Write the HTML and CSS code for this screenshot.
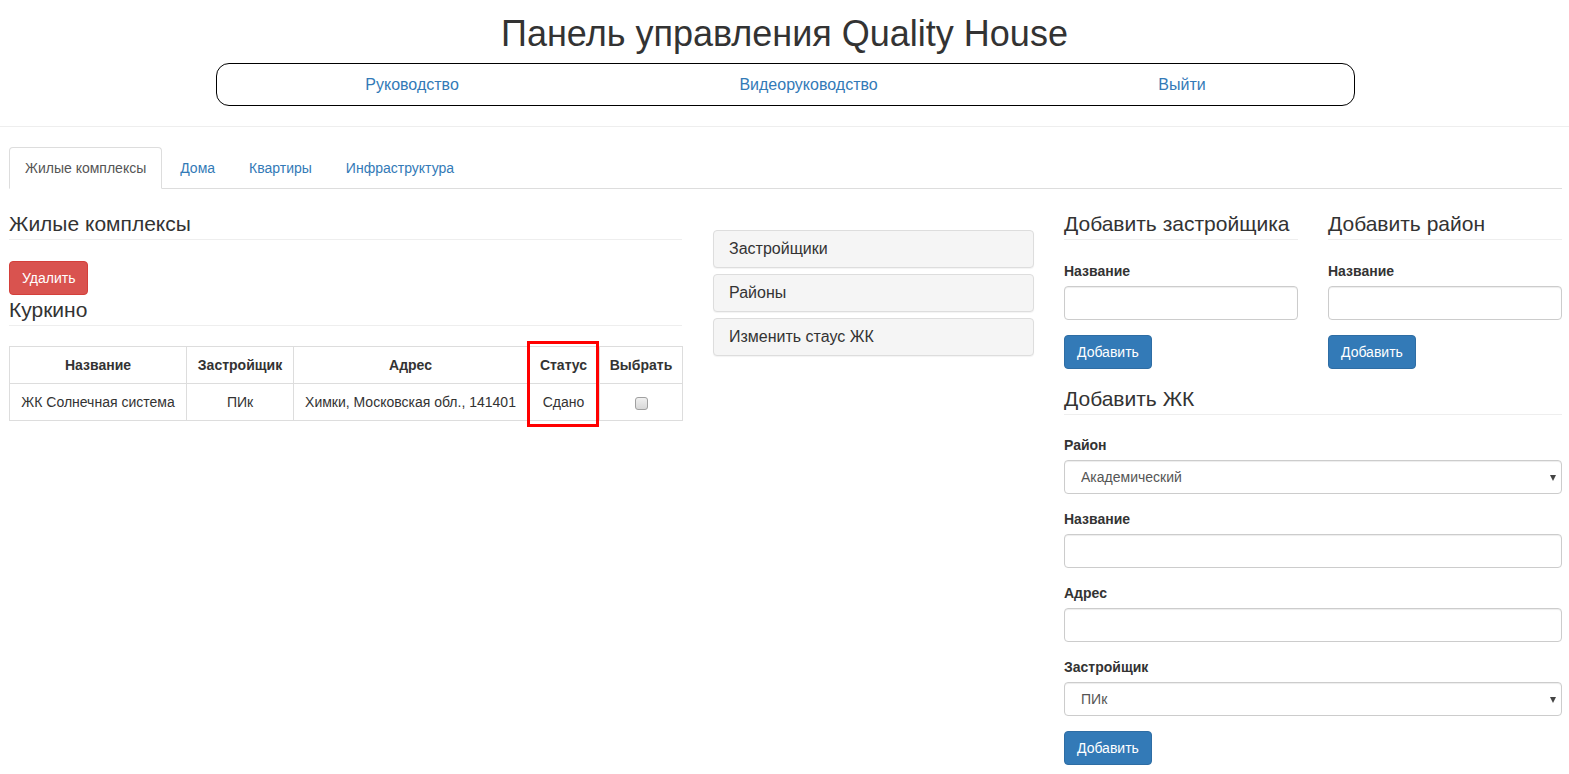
FILE: index.html
```html
<!DOCTYPE html>
<html lang="ru">
<head>
<meta charset="utf-8">
<title>Панель управления Quality House</title>
<link rel="stylesheet" href="styles.css">
</head>
<body>
<header class="top">
  <h1 class="title">Панель управления Quality House</h1>
  <nav class="mainnav">
    <a href="#">Руководство</a>
    <a href="#">Видеоруководство</a>
    <a href="#">Выйти</a>
  </nav>
</header>
<hr class="divider">
<div class="page">
  <ul class="tabs">
    <li class="tab active"><a href="#">Жилые комплексы</a></li>
    <li class="tab"><a href="#">Дома</a></li>
    <li class="tab"><a href="#">Квартиры</a></li>
    <li class="tab"><a href="#">Инфраструктура</a></li>
  </ul>
  <div class="cols">
    <section class="col-left">
      <h3 class="page-header">Жилые комплексы</h3>
      <button class="btn btn-danger">Удалить</button>
      <h3 class="page-header sub">Куркино</h3>
      <div class="table-wrap">
        <table class="table">
          <colgroup>
            <col class="c1"><col class="c2"><col class="c3"><col class="c4"><col class="c5">
          </colgroup>
          <thead>
            <tr><th>Название</th><th>Застройщик</th><th>Адрес</th><th>Статус</th><th>Выбрать</th></tr>
          </thead>
          <tbody>
            <tr><td>ЖК Солнечная система</td><td>ПИк</td><td>Химки, Московская обл., 141401</td><td>Сдано</td><td><input type="checkbox" class="check"></td></tr>
          </tbody>
        </table>
        <div class="highlight"></div>
      </div>
    </section>
    <section class="col-mid">
      <div class="panel">Застройщики</div>
      <div class="panel">Районы</div>
      <div class="panel">Изменить стаус ЖК</div>
    </section>
    <section class="col-right">
      <div class="pair">
        <div class="form-block">
          <h3 class="page-header">Добавить застройщика</h3>
          <label class="lbl first">Название</label>
          <input class="control" type="text">
          <button class="btn btn-primary">Добавить</button>
        </div>
        <div class="form-block">
          <h3 class="page-header">Добавить район</h3>
          <label class="lbl first">Название</label>
          <input class="control" type="text">
          <button class="btn btn-primary">Добавить</button>
        </div>
      </div>
      <h3 class="page-header gap">Добавить ЖК</h3>
      <div class="group">
        <label class="lbl first2">Район</label>
        <div class="select-wrap"><select class="control select"><option>Академический</option></select></div>
      </div>
      <div class="group">
        <label class="lbl">Название</label>
        <input class="control" type="text">
      </div>
      <div class="group">
        <label class="lbl">Адрес</label>
        <input class="control" type="text">
      </div>
      <div class="group">
        <label class="lbl">Застройщик</label>
        <div class="select-wrap"><select class="control select"><option>ПИк</option></select></div>
      </div>
      <button class="btn btn-primary">Добавить</button>
    </section>
  </div>
</div>
</body>
</html>
```

FILE: styles.css
```css
* { box-sizing: border-box; }
html, body { margin: 0; padding: 0; }
body {
  font-family: "Liberation Sans", Arial, sans-serif;
  font-size: 14px;
  line-height: 20px;
  color: #333;
  background: #fff;
}
a { color: #337ab7; text-decoration: none; }

.top { display: flex; flex-direction: column; align-items: center; }
.title {
  margin: 14px 0 0;
  font-size: 36px;
  line-height: 40px;
  font-weight: 400;
  color: #333;
}
.mainnav {
  margin: 9px 0 0 2px;
  width: 1139px;
  height: 43px;
  border: 1px solid #000;
  border-radius: 13px;
  display: flex;
  justify-content: space-around;
  align-items: center;
  padding: 0 8px;
  font-size: 16px;
}
.divider {
  margin: 20px 0 0;
  border: 0;
  border-top: 1px solid #eee;
}

.page { padding: 0 7px 0 9px; }
.tabs {
  list-style: none;
  margin: 20px 0 0;
  padding: 0;
  display: flex;
  border-bottom: 1px solid #ddd;
}
.tab { margin-bottom: -1px; margin-right: 2px; }
.tab a {
  display: block;
  padding: 10px 15px;
  line-height: 20px;
  border: 1px solid transparent;
  border-radius: 4px 4px 0 0;
}
.tab.active a {
  color: #555;
  border-color: #ddd #ddd transparent;
  background: #fff;
}

.cols {
  display: grid;
  grid-template-columns: 674px 321px 1fr;
  column-gap: 30px;
  align-items: start;
}
.page-header {
  margin: 20px 0 0;
  font-size: 21px;
  line-height: 30px;
  font-weight: 400;
  color: #333;
  border-bottom: 1px solid #eee;
}
.col-left .page-header { margin-right: 1px; }
.page-header.sub { margin-top: 0; }
.page-header.gap { margin-top: 15px; }

.btn {
  display: inline-block;
  font-family: inherit;
  font-size: 14px;
  line-height: 20px;
  padding: 6px 12px;
  border: 1px solid transparent;
  border-radius: 4px;
  color: #fff;
  cursor: pointer;
}
.col-left .btn-danger { margin-top: 21px; display: block; }
.btn-danger { background: #d9534f; border-color: #d43f3a; }
.btn-primary { background: #337ab7; border-color: #2e6da4; margin-top: 15px; }

.table-wrap { position: relative; margin-top: 20px; }
.table {
  width: 673px;
  border-collapse: collapse;
  table-layout: fixed;
  font-size: 14px;
}
.c1 { width: 177px; } .c2 { width: 107px; } .c3 { width: 234px; } .c4 { width: 72px; } .c5 { width: 83px; }
.table th, .table td {
  border: 1px solid #ddd;
  padding: 8px;
  line-height: 20px;
  text-align: center;
  white-space: nowrap;
}
.table th { font-weight: 700; }
.check {
  -webkit-appearance: none;
  appearance: none;
  margin: 0;
  width: 13px;
  height: 13px;
  vertical-align: middle;
  border: 1px solid #a0a0a0;
  border-radius: 3px;
  background: linear-gradient(#f0f0f0, #d8d8d8);
}
.highlight {
  position: absolute;
  left: 518px;
  top: -5px;
  width: 72px;
  height: 86px;
  border: 3px solid #f00;
}

.col-mid { margin-top: 41px; display: flex; flex-direction: column; gap: 6px; }
.panel {
  background: #f5f5f5;
  border: 1px solid #ddd;
  border-radius: 4px;
  box-shadow: 0 1px 1px rgba(0,0,0,.05);
  padding: 8px 15px;
  font-size: 16px;
  line-height: 20px;
}

.pair { display: grid; grid-template-columns: 1fr 1fr; column-gap: 30px; }
.form-block { display: flex; flex-direction: column; align-items: stretch; }
.form-block .btn { align-self: flex-start; }
.lbl {
  display: block;
  font-weight: 700;
  font-size: 14px;
  line-height: 20px;
  margin: 15px 0 5px;
}
.lbl.first { margin-top: 21px; }
.lbl.first2 { margin-top: 20px; }
.control {
  display: block;
  width: 100%;
  height: 34px;
  padding: 6px 12px;
  border: 1px solid #ccc;
  border-radius: 4px;
  font-family: inherit;
  font-size: 14px;
  color: #555;
  background: #fff;
  box-shadow: inset 0 1px 1px rgba(0,0,0,.075);
}
.select-wrap { position: relative; }
.select { appearance: none; -webkit-appearance: none; padding-left: 16px; }
.select-wrap::after {
  content: "";
  position: absolute;
  right: 6px;
  top: 15px;
  border-left: 3px solid transparent;
  border-right: 3px solid transparent;
  border-top: 6px solid #444;
  pointer-events: none;
}
```
